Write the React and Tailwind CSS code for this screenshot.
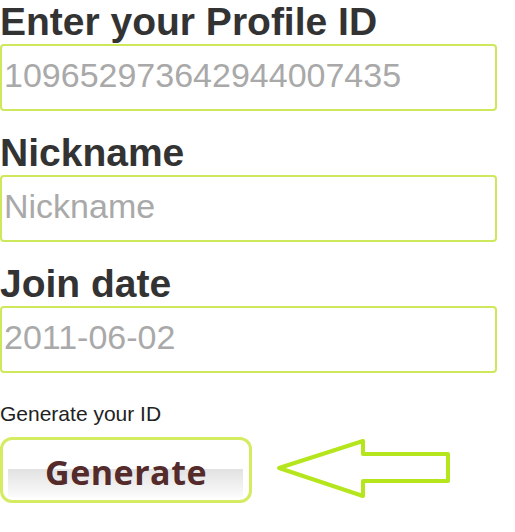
const fields = [
  { label: "Enter your Profile ID", placeholder: "109652973642944007435" },
  { label: "Nickname", placeholder: "Nickname" },
  { label: "Join date", placeholder: "2011-06-02" },
];

const Arrow = () => (
  <svg width="190" height="70" viewBox="0 0 190 70" className="shrink-0">
    <polygon
      points="9,36 93,9 93,22 178,22 178,49 93,49 93,64"
      fill="none"
      stroke="#b5e61d"
      strokeWidth="4"
      strokeLinejoin="round"
    />
  </svg>
);

export default function App() {
  return (
    <div className="w-[515px] h-[532px] bg-white font-['Liberation_Sans',Arial,sans-serif] text-[#333333] overflow-hidden">
      {fields.map((f, i) => (
        <div key={f.label} className={i === 0 ? "" : "mt-[20px]"}>
          {/* Label */}
          <h2 className="text-[39px] leading-[44px] font-bold whitespace-nowrap">{f.label}</h2>
          <input
            type="text"
            placeholder={f.placeholder}
            className="block w-[497px] h-[67px] border-2 border-[#cde85a] rounded-[4px] pl-[2px] pb-1 text-[34px] outline-none placeholder:text-[#a9a9a9]"
          />
        </div>
      ))}

      <p className="mt-[29px] text-[21px] leading-[23px] text-[#222222]">Generate your ID</p>

      <div className="mt-[12px] flex items-start">
        <button
          className="w-[252px] h-[66px] shrink-0 border-[3px] border-[#d3ec62] rounded-[12px] bg-white bg-[linear-gradient(to_bottom,#e2e2e2,#fbfbfb)] bg-no-repeat bg-[length:235px_28px] bg-[position:5px_29px] flex justify-center pt-[15px]"
        >
          <span className="font-['Open_Sans',sans-serif] font-bold text-[34px] leading-none tracking-[0.5px] text-[#542a2a]">
            Generate
          </span>
        </button>
        <div className="ml-[18px] -mt-[5px]">
          <Arrow />
        </div>
      </div>
    </div>
  );
}
